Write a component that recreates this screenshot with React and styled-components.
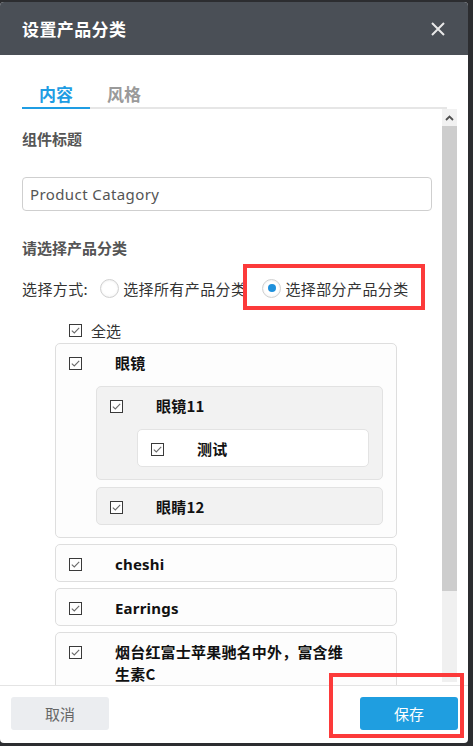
import React from "react";
import styled, { createGlobalStyle } from "styled-components";

const Global = createGlobalStyle`
  html, body { margin: 0; padding: 0; background: #2c2d30; }
  body { font-family: "Noto Sans", "Noto Sans CJK SC", sans-serif; overflow: hidden; }
  * { box-sizing: border-box; }
`;

const Dialog = styled.div`
  position: relative;
  margin-top: 2px;
  width: 468px;
  height: 741px;
  background: #fff;
  border-radius: 4px;
  display: flex;
  flex-direction: column;
  overflow: hidden;
`;

const Header = styled.div`
  height: 53px;
  flex: none;
  background: #4a4f56;
  display: flex;
  align-items: center;
  justify-content: space-between;
  padding: 0 22px 0 22px;
`;

const Title = styled.div`
  color: #fff;
  font-size: 17px;
  font-weight: 700;
  font-family: "Noto Sans CJK SC", sans-serif;
  letter-spacing: 0.4px;
`;

const CloseBtn = styled.div`
  width: 14px;
  height: 14px;
  margin-right: 1px;
  display: flex;
`;

const Tabs = styled.div`
  flex: none;
  margin: 24px 21px 0 22px;
  display: flex;
  border-bottom: 2px solid #e6e6e6;
`;

const Tab = styled.div`
  width: 68px;
  height: 30px;
  line-height: 30px;
  text-align: center;
  font-size: 17px;
  font-weight: 700;
  font-family: "Noto Sans CJK SC", sans-serif;
  color: ${(p) => (p.$active ? "#1f9de3" : "#9a9a9a")};
  margin-bottom: -2px;
  border-bottom: 2px solid ${(p) => (p.$active ? "#1f9de3" : "transparent")};
`;

const ScrollRow = styled.div`
  height: 576px;
  flex: none;
  display: flex;
`;

const Content = styled.div`
  flex: 1;
  overflow: hidden;
  padding: 20px 10px 0 22px;
`;

const Scrollbar = styled.div`
  width: 15px;
  margin-right: 11px;
  height: 573px;
  display: flex;
  flex-direction: column;
  background: #f0f0f0;
`;

const ScrollUp = styled.div`
  height: 17px;
  display: flex;
  align-items: center;
  justify-content: center;
  background: #f1f1f1;
`;

const Thumb = styled.div`
  height: 465px;
  background: #cdcdcd;
`;

const SectionLabel = styled.div`
  font-size: 15px;
  font-weight: 700;
  color: #555;
  line-height: 20px;
  font-family: "Noto Sans CJK SC", sans-serif;
  margin-top: ${(p) => p.$mt || 0}px;
`;

const TextInput = styled.div`
  margin-top: 28px;
  height: 34px;
  width: 410px;
  border: 1px solid #cfcfcf;
  border-radius: 4px;
  padding: 0 7px;
  display: flex;
  align-items: center;
  font-size: 15px;
  color: #555;
  letter-spacing: 0.4px;
`;

const RadioRow = styled.div`
  position: relative;
  margin-top: 18px;
  height: 24px;
  display: flex;
  align-items: center;
  font-size: 15px;
  color: #333;
  letter-spacing: 0.4px;
  font-family: "Noto Sans CJK SC", sans-serif;
`;

const RadioLabel = styled.span``;

const RadioCircle = styled.span`
  width: 19px;
  height: 19px;
  border-radius: 50%;
  border: 1px solid #d0d0d0;
  background: radial-gradient(circle at 50% 40%, #ffffff 55%, #eeeeee 100%);
  display: inline-flex;
  align-items: center;
  justify-content: center;
  margin: 0 4px 0 ${(p) => p.$ml || 0}px;
  box-shadow: inset 0 1px 2px rgba(0,0,0,0.06);
  &::after {
    content: "";
    display: ${(p) => (p.$checked ? "block" : "none")};
    width: 8px;
    height: 8px;
    border-radius: 50%;
    background: #1e90dc;
  }
`;

const RedMark = styled.div`
  position: absolute;
  border: 4px solid #fc3a3a;
  pointer-events: none;
`;

const SelectAll = styled.div`
  margin: 20px 0 0 47px;
  height: 20px;
  display: flex;
  align-items: center;
  gap: 9px;
  font-size: 15px;
  color: #333;
  font-family: "Noto Sans CJK SC", sans-serif;
`;

const TreeList = styled.div`
  margin: 3px 0 0 33px;
  width: 342px;
  display: flex;
  flex-direction: column;
  gap: 6px;
`;

const bgByLevel = ["#fdfdfd", "#f2f2f2", "#ffffff"];
const borderByLevel = ["#dedede", "#e2e2e2", "#e3e3e3"];

const Node = styled.div`
  border: 1px solid ${(p) => borderByLevel[p.$level]};
  background: ${(p) => bgByLevel[p.$level]};
  border-radius: 5px;
`;

const NodeRow = styled.div`
  padding: 8px 13px 6px 13px;
  display: flex;
  align-items: flex-start;
`;

const CheckWrap = styled.span`
  width: 13px;
  height: 22px;
  flex: none;
  display: flex;
  align-items: center;
  margin-right: 33px;
`;

const NodeLabel = styled.span`
  font-size: 15px;
  font-weight: 700;
  line-height: 22px;
  color: #111;
  max-width: 232px;
  letter-spacing: 0.2px;
  ${(p) => (p.$cjk ? 'font-family: "Noto Sans CJK SC", sans-serif;' : "")}
`;

const Children = styled.div`
  padding: 6px 13px 12px 40px;
  display: flex;
  flex-direction: column;
  gap: 7px;
`;

const Footer = styled.div`
  flex: none;
  border-top: 1px solid #e4e4e4;
  padding: 11px 10px 0 11px;
  display: flex;
  justify-content: space-between;
`;

const Button = styled.div`
  width: 98px;
  height: 33px;
  border-radius: 3px;
  display: flex;
  align-items: center;
  justify-content: center;
  font-size: 15px;
  font-family: "Noto Sans CJK SC", sans-serif;
  background: ${(p) => (p.$primary ? "#1f9ee0" : "#ebedf0")};
  color: ${(p) => (p.$primary ? "#fff" : "#666")};
`;

const CheckIcon = () => (
  <svg width="13" height="13" viewBox="0 0 13 13">
    <rect x="0.5" y="0.5" width="12" height="12" fill="#fff" stroke="#3a3a3a" strokeWidth="1" />
    <path d="M2.8 6.6 L5.3 9 L10.2 3.9" fill="none" stroke="#6a6a6a" strokeWidth="1.1" />
  </svg>
);

const TreeNode = ({ level, label, cjk, children }) => (
  <Node $level={level}>
    <NodeRow>
      <CheckWrap><CheckIcon /></CheckWrap>
      <NodeLabel $cjk={cjk}>{label}</NodeLabel>
    </NodeRow>
    {children && <Children>{children}</Children>}
  </Node>
);

export default function App() {
  return (
    <>
      <Global />
      <Dialog>
        <Header>
          <Title>设置产品分类</Title>
          <CloseBtn>
            <svg width="14" height="14" viewBox="0 0 14 14">
              <path d="M1 1 L13 13 M13 1 L1 13" stroke="#e8e8e8" strokeWidth="2" />
            </svg>
          </CloseBtn>
        </Header>
        <Tabs>
          <Tab $active>内容</Tab>
          <Tab>风格</Tab>
        </Tabs>
        <ScrollRow>
          <Content>
            <SectionLabel>组件标题</SectionLabel>
            <TextInput>Product Catagory</TextInput>
            <SectionLabel $mt={27}>请选择产品分类</SectionLabel>
            <RadioRow>
              <RadioLabel>选择方式:</RadioLabel>
              <RadioCircle $ml={12} />
              <RadioLabel>选择所有产品分类</RadioLabel>
              <RadioCircle $ml={16} $checked />
              <RadioLabel>选择部分产品分类</RadioLabel>
              <RedMark style={{ left: 221, top: -12, width: 182, height: 46 }} />
            </RadioRow>
            <SelectAll>
              <CheckIcon />
              <span>全选</span>
            </SelectAll>
            <TreeList>
              <TreeNode level={0} label="眼镜" cjk>
                <TreeNode level={1} label="眼镜11" cjk>
                  <TreeNode level={2} label="测试" cjk />
                </TreeNode>
                <TreeNode level={1} label="眼睛12" cjk />
              </TreeNode>
              <TreeNode level={0} label="cheshi" />
              <TreeNode level={0} label="Earrings" />
              <TreeNode level={0} label="烟台红富士苹果驰名中外，富含维生素C" cjk />
            </TreeList>
          </Content>
          <Scrollbar>
            <ScrollUp>
              <svg width="9" height="6" viewBox="0 0 9 6">
                <path d="M1 5 L4.5 1.5 L8 5" fill="none" stroke="#505050" strokeWidth="1.8" />
              </svg>
            </ScrollUp>
            <Thumb />
          </Scrollbar>
        </ScrollRow>
        <Footer>
          <Button>取消</Button>
          <Button $primary>保存</Button>
        </Footer>
        <RedMark style={{ left: 329, top: 671, width: 135, height: 65 }} />
      </Dialog>
    </>
  );
}
